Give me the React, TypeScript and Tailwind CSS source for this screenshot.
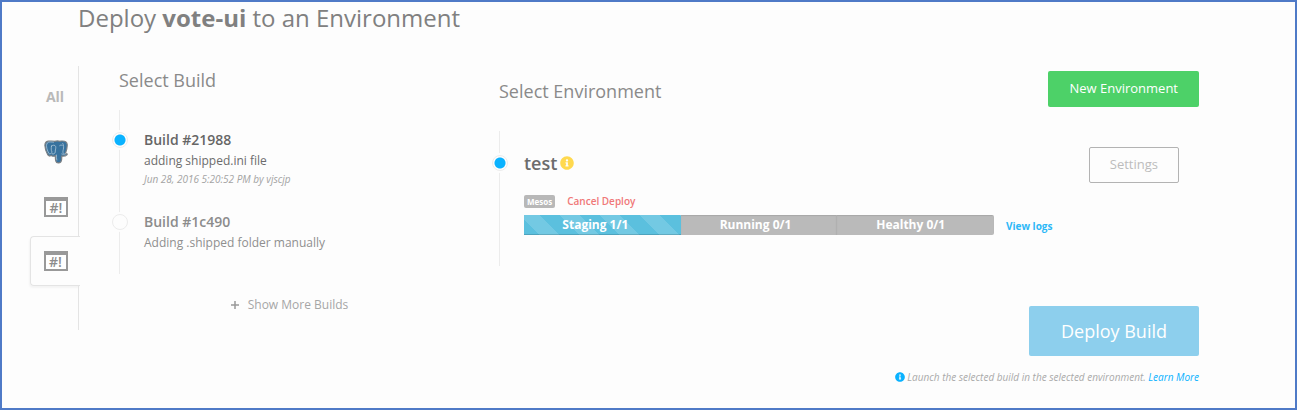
import React from "react";
import { FaInfoCircle } from "react-icons/fa";

type Build = {
  id: string;
  message: string;
  meta?: string;
};

const builds: Build[] = [
  { id: "21988", message: "adding shipped.ini file", meta: "Jun 28, 2016 5:20:52 PM by vjscjp" },
  { id: "1c490", message: "Adding .shipped folder manually" },
];

const radioClass =
  "absolute size-4 cursor-pointer appearance-none rounded-full border border-[#ececec] bg-[#fdfdfd] shadow-[0_0_0_2px_#fdfdfd] checked:bg-[radial-gradient(circle,#0ab2ff_5px,#fdfdfd_6px)]";

function ElephantIcon() {
  return (
    <svg viewBox="0 0 24 24" className="size-6" aria-hidden="true">
      <path
        d="M4.200 1.200C2 1.600.8 3 .9 5.600c.1 3 1.300 6.600 2.800 9 1 1.600 2.300 1.900 3.500.8.600.6 1.200.8 2 .8.800 0 1.500 0 2.200-.3 0 1.700-.1 3.400.3 4.900.4 1.500 1.400 2.200 2.800 2.100 1.900-.1 2.900-1.200 3.100-3.200l.2-3.600c1.700.2 4-.1 5.100-1.300.6-.7.300-1.200-.5-1.200h-1c1-2.600 2-6.200 1.800-9.100C23 2.100 21 1 18.500 1c-1 0-1.700.2-2.500.3C14.300.8 12.500.8 10.800 1.300 8.600.9 6.300.9 4.200 1.200z"
        fill="#38729e"
        stroke="#7c8084"
        strokeWidth="1.200"
      />
      <path
        d="M9.500 2.200C7.500 1.900 5.500 1.800 4.200 2.300 1.300 3.700 2.600 9.400 4.800 13.200c.6 1 1.200 1.100 1.900.3M7.600 6c1.200-1.200 3.400-1.100 4 .4.600 1.700-.4 3.200-.3 4.700.1 1.300-.5 2.900-2.300 2.900-1.600 0-1.500-1.200-1-2C7 10.300 7 8 7.600 6zM12.400 15c0 1.900 0 3.600.4 5M18.800 3.500c1 1.900 1 4 .5 6-.3 1.300-.7 2.500-.1 3.700M15.700 5.600c.8-.7 1.700-.7 2.500-.2M17.800 14c1.400.5 3 .3 4.200-.4"
        fill="none"
        stroke="#bfd2e0"
        strokeWidth="0.700"
        strokeLinecap="round"
      />
    </svg>
  );
}

function ScriptIcon() {
  return (
    <span className="flex h-5 w-6 items-center justify-center border-2 border-t-4 border-[#999] bg-white text-sm leading-3 font-semibold text-[#8c8c8c]">
      #!
    </span>
  );
}

function NavTab({ label, children }: { label: string; children: React.ReactNode }) {
  return (
    <li className="flex border-r border-[#e4e4e4]">
      <button type="button" aria-label={label} className="flex h-[55px] flex-1 items-center justify-center pl-1">
        {children}
      </button>
    </li>
  );
}

function ServiceNav() {
  return (
    <nav aria-label="Services" className="w-[49px] shrink-0">
      <ul className="flex h-full flex-col">
        <li className="flex border-r border-[#e4e4e4] pt-[3px]">
          <button type="button" className="h-[55px] flex-1 pl-0.5 text-sm font-bold text-[#b9b9b9]">
            All
          </button>
        </li>
        <NavTab label="Database">
          <ElephantIcon />
        </NavTab>
        <NavTab label="Script service">
          <ScriptIcon />
        </NavTab>
        <li aria-hidden="true" className="h-0.5 border-r border-[#e4e4e4]" />
        <li className="-mr-px flex">
          <button
            type="button"
            aria-label="vote-ui"
            aria-current="true"
            className="flex h-[50px] flex-1 items-center justify-center rounded-l border border-r-0 border-[#e4e4e4] shadow-[-1px_2px_2px_rgba(0,0,0,0.04)]"
          >
            <ScriptIcon />
          </button>
        </li>
        <li aria-hidden="true" className="min-h-11 flex-1 border-r border-[#e4e4e4]" />
      </ul>
    </nav>
  );
}

function BuildList() {
  return (
    <section className="ml-10 w-[340px] shrink-0">
      <h2 className="text-lg leading-7 text-[#8a8a8a]">Select Build</h2>
      <ul className="mt-4 flex h-[164px] flex-col gap-6 border-l border-[#ececec] pt-5">
        {builds.map((build, i) => (
          <li key={build.id} className="relative pl-6">
            <label className="block cursor-pointer">
              <input type="radio" name="build" defaultChecked={i === 0} className={`${radioClass} top-0.5 -left-2`} />
              <span className={`block text-sm leading-5 font-semibold ${i === 0 ? "text-[#666]" : "text-[#8c8c8c]"}`}>
                Build #{build.id}
              </span>
              <span className={`mt-px block text-xs leading-5 ${i === 0 ? "text-[#6c6c6c]" : "text-[#8f8f8f]"}`}>
                {build.message}
              </span>
              {build.meta && <span className="block text-[10px] leading-[17px] text-[#a3a3a3] italic">{build.meta}</span>}
            </label>
          </li>
        ))}
      </ul>
      <button type="button" className="mx-auto mt-[21px] flex items-center gap-2 text-xs leading-5 text-[#a6a6a6]">
        <svg viewBox="0 0 10 10" className="size-[10px]" aria-hidden="true">
          <path d="M5 1v8M1 5h8" stroke="#999" strokeWidth="1.500" />
        </svg>
        Show More Builds
      </button>
    </section>
  );
}

function DeployProgress() {
  return (
    <div className="flex items-start gap-3">
      <ol className="grid h-5 w-[470px] grid-cols-3 overflow-hidden rounded-r-xs bg-[#bababa] text-center text-xs leading-[19px] font-bold text-white">
        <li className="bg-[#5bc0de] bg-[linear-gradient(45deg,rgba(255,255,255,0.15)_25%,transparent_25%,transparent_50%,rgba(255,255,255,0.15)_50%,rgba(255,255,255,0.15)_75%,transparent_75%,transparent)] bg-[length:40px_40px] bg-[position:-4px_0] pr-3.5 shadow-[inset_0_-1px_0_rgba(0,0,0,0.15)]">
          Staging 1/1
        </li>
        <li className="border-r border-[#b0b0b0] pr-1.5 shadow-[inset_0_1px_1px_rgba(0,0,0,0.1)]">Running 0/1</li>
        <li className="pr-2.5 shadow-[inset_0_1px_1px_rgba(0,0,0,0.1)]">Healthy 0/1</li>
      </ol>
      <a href="#logs" className="mt-[3px] text-[10px] leading-4 font-bold text-[#2db8f7]">
        View logs
      </a>
    </div>
  );
}

function EnvironmentPanel() {
  return (
    <section className="ml-10 min-w-0 flex-1">
      <div className="flex items-center justify-between pt-[5px]">
        <h2 className="pt-1 text-lg leading-7 text-[#8a8a8a]">Select Environment</h2>
        <button type="button" className="h-9 rounded-xs bg-[#4dd168] px-[21px] text-[13px] font-medium text-white">
          New Environment
        </button>
      </div>
      <div className="relative mt-6 h-[135px] border-l border-[#ececec] pt-4 pr-5 pl-6">
        <div className="flex items-center justify-between">
          <label className="flex cursor-pointer items-center gap-[3px] pb-1 text-lg leading-7 font-semibold text-[#6c6c6c]">
            <input type="radio" name="environment" defaultChecked className={`${radioClass} top-6 -left-2`} />
            test
            <FaInfoCircle className="size-[14px] text-[#ffd94f]" />
          </label>
          <button type="button" className="h-9 rounded-xs border border-[#b3b3b3] px-5 text-[13px] text-[#bcbcbc]">
            Settings
          </button>
        </div>
        <div className="mt-2.5 mb-1.5 flex items-center gap-3">
          <span className="rounded-xs bg-[#b8b8b8] px-[3px] text-[8px] leading-[13px] font-bold text-white">Mesos</span>
          <button type="button" className="text-[10px] leading-4 font-semibold text-[#f07878]">
            Cancel Deploy
          </button>
        </div>
        <DeployProgress />
      </div>
      <div className="mt-10 flex flex-col items-end">
        <button type="button" className="h-[50px] rounded-xs bg-[#8dcfed] px-8 text-lg text-white">
          Deploy Build
        </button>
        <p className="mt-[11px] flex items-center gap-0.5 text-[10px] leading-5 text-[#aaa] italic">
          <FaInfoCircle className="size-[10px] text-[#0ab2ff]" />
          <span>
            Launch the selected build in the selected environment.{" "}
            <a href="#learn-more" className="text-[#0ab2ff]">
              Learn More
            </a>
          </span>
        </p>
      </div>
    </section>
  );
}

export default function App() {
  return (
    <main className="min-h-screen border-2 border-[#4f7ac7] bg-[#fdfdfd] pr-24 pl-7 font-['Open_Sans',sans-serif]">
      <h1 className="pl-12 text-2xl leading-8 text-[#808080]">
        Deploy <strong className="font-bold">vote-ui</strong> to an Environment
      </h1>
      <div className="mt-8 flex items-start">
        <ServiceNav />
        <BuildList />
        <EnvironmentPanel />
      </div>
    </main>
  );
}
